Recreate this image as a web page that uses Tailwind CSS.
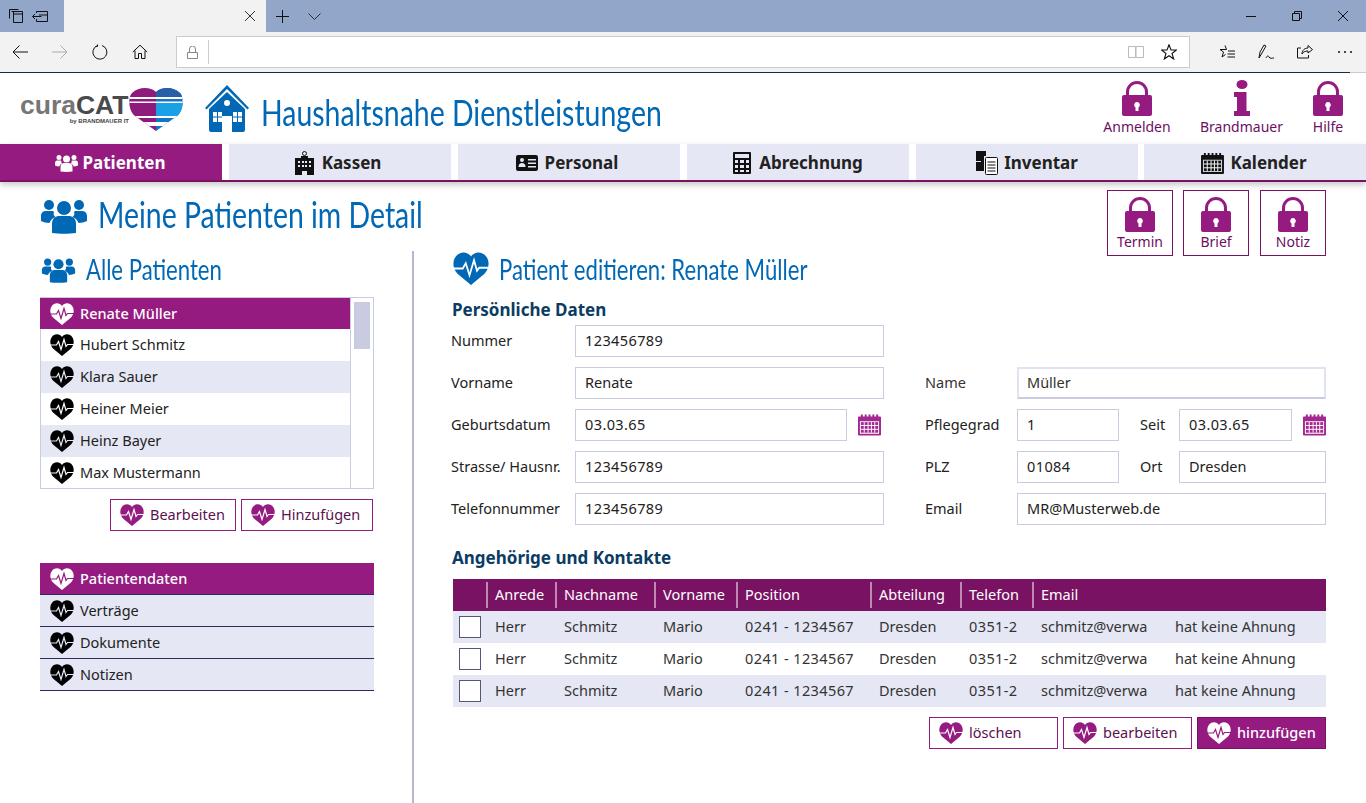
<!DOCTYPE html>
<html lang="de">
<head>
<meta charset="UTF-8">
<title>curaCAT - Haushaltsnahe Dienstleistungen</title>
<script src="https://cdn.jsdelivr.net/npm/@tailwindcss/browser@4"></script>
</head>
<body class="bg-white h-[803px] w-[1366px] overflow-hidden font-['Noto_Sans',sans-serif] text-[14.5px] text-[#222]">

<!-- shared icons -->
<svg class="absolute w-0 h-0" aria-hidden="true">
  <defs>
    <mask id="pulse" maskUnits="userSpaceOnUse" x="0" y="0" width="24" height="22">
      <rect width="24" height="22" fill="#fff"/>
      <polyline points="0,11 6.5,11 8.5,7.5 11,15.5 14,5.5 16,12.5 17.5,10.5 24,10.5" fill="none" stroke="#000" stroke-width="1.2"/>
    </mask>
    <symbol id="heart" viewBox="0 0 24 22"><path mask="url(#pulse)" fill="currentColor" d="M12 22 3 14.500C0 11.500-.5 6.500 1.500 3.500 4-.5 9.500-.8 12 3 14.500-.8 20-.5 22.500 3.500 24.500 6.500 24 11.500 21 14.500Z"/></symbol>
    <symbol id="lock" viewBox="0 0 30 36"><path d="M5.500 17V12a9.500 9.500 0 0 1 19 0v5" fill="none" stroke="currentColor" stroke-width="3"/><path fill="currentColor" fill-rule="evenodd" d="M2 15h26a2 2 0 0 1 2 2v17a2 2 0 0 1-2 2H2a2 2 0 0 1-2-2V17a2 2 0 0 1 2-2ZM15 22a3 3 0 0 0-1.500 5.500V31h3v-3.500A3 3 0 0 0 15 22Z"/></symbol>
    <symbol id="users" viewBox="0 0 46 36"><g fill="currentColor"><circle cx="23" cy="10" r="7"/><path d="M11 36V27c0-6 4-8 7-8h10c3 0 7 2 7 8v9c-7 1-17 1-24 0Z" transform="translate(0 -1)"/><circle cx="8" cy="7" r="5"/><circle cx="38" cy="7" r="5"/><path d="M0 23v-5c0-4 3-5 5-5h6c1 0 2 .5 2 1-1 2 0 4 1.500 5-3 1-5 3-6 6-3 0-6-1-8.500-2Z"/><path d="M46 23v-5c0-4-3-5-5-5h-6c-1 0-2 .5-2 1 1 2 0 4-1.500 5 3 1 5 3 6 6 3 0 6-1 8.500-2Z"/></g></symbol>
    <symbol id="calendar" viewBox="0 0 24 22"><path fill="currentColor" fill-rule="evenodd" d="M1 2h22a1 1 0 0 1 1 1v18a1 1 0 0 1-1 1H1a1 1 0 0 1-1-1V3a1 1 0 0 1 1-1ZM2 7v13h20V7Z"/><g fill="currentColor"><rect x="3" width="2" height="4"/><rect x="7" width="2" height="4"/><rect x="11" width="2" height="4"/><rect x="15" width="2" height="4"/><rect x="19" width="2" height="4"/><rect x="3" y="8" width="18" height="11"/></g><g stroke="#fff" stroke-width="1"><path d="M3 11.500h18M3 15.500h18M6.500 8v11M10.500 8v11M14 8v11M17.500 8v11"/></g></symbol>
  </defs>
</svg>

<!-- browser chrome: tab strip -->
<div class="h-8 bg-[#92a6c9] flex items-center">
  <div class="w-16 flex items-center h-8 pl-[9px] gap-[9px]">
    <svg class="w-[14px] h-[14px]" viewBox="0 0 14 14" fill="none" stroke="#111"><path d="M.5 9.500v-9h9M2.500 2.500h11v11h-9v-11M4.500 5h9"/></svg>
    <svg class="w-4 h-[11px]" viewBox="0 0 16 11" fill="none" stroke="#111"><path d="M4.500 2V.5h11v10h-11V8M.5 5.500h9M3 3 .5 5.500 3 8M7 4h8"/></svg>
  </div>
  <div class="w-[202px] h-8 bg-[#f2f2f2] flex items-center justify-end pr-[11px]">
    <svg class="w-[10px] h-[10px]" viewBox="0 0 10 10" stroke="#333" fill="none"><path d="M0 0 10 10M10 0 0 10"/></svg>
  </div>
  <svg class="w-[13px] h-[13px] ml-[10px]" viewBox="0 0 13 13" stroke="#111" fill="none"><path d="M6.500 0v13M0 6.500h13"/></svg>
  <svg class="w-[13px] h-[7px] ml-[19px]" viewBox="0 0 13 7" stroke="#333" fill="none"><path d="M.5.500l6 6 6-6"/></svg>
  <div class="ml-auto flex items-center gap-[36px] pr-[18px]">
    <div class="w-[10px] h-px bg-[#111]"></div>
    <svg class="w-[10px] h-[10px]" viewBox="0 0 10 10" fill="none" stroke="#111"><path d="M.5 2.500h7v7h-7zM2.500 2.500v-2h7v7h-2"/></svg>
    <svg class="w-[10px] h-[10px]" viewBox="0 0 10 10" stroke="#111" fill="none"><path d="M0 0 10 10M10 0 0 10"/></svg>
  </div>
</div>

<!-- browser chrome: toolbar -->
<div class="h-10 bg-[#f2f2f2] flex items-start">
  <div class="flex items-center h-10 w-[176px] pl-[12px] gap-[24px]">
    <svg class="w-4 h-4" viewBox="0 0 16 16" fill="none" stroke="#111"><path d="M16 8H1M7.500 1.500 1 8l6.500 6.500"/></svg>
    <svg class="w-4 h-4" viewBox="0 0 16 16" fill="none" stroke="#aaa"><path d="M0 8h15M8.500 1.500 15 8l-6.500 6.500"/></svg>
    <svg class="w-4 h-4" viewBox="0 0 16 16" fill="none" stroke="#111"><path d="M5 1.800A7 7 0 1 0 10 1.500M5.500 .500V2.500H3.500"/></svg>
    <svg class="w-4 h-4" viewBox="0 0 16 16" fill="none" stroke="#111"><path d="M.8 8 8 1.200 15.200 8M3 6.500V14.500h3.500v-5h3v5H13V6.500"/></svg>
  </div>
  <div class="w-[1014px] h-8 mt-1 bg-white border border-[#ccc] flex items-center">
    <svg class="w-[11px] h-[13px] ml-[10px]" viewBox="0 0 11 13" fill="none" stroke="#888"><path d="M.5 6.500h10v6H.500zM2.500 6.500V3a3 3 0 0 1 6 0v3.500"/></svg>
    <div class="w-px h-6 bg-[#ccc] ml-[10px]"></div>
    <svg class="w-4 h-[14px] ml-auto" viewBox="0 0 16 14" fill="none" stroke="#bbb"><path d="M.5 1.500h7v11h-7zM8 1.500h7.500v11H8z"/></svg>
    <svg class="w-4 h-4 ml-[17px] mr-[12px]" viewBox="0 0 16 16" fill="none" stroke="#111" stroke-width="1.100"><path d="M8 .8 10 6h5.500L11 9.500l1.700 5.500L8 11.700 3.300 15 5 9.500.5 6H6Z"/></svg>
  </div>
  <div class="flex items-center h-10 ml-[29px] gap-[23px]">
    <svg class="w-4 h-4" viewBox="0 0 16 16" fill="none" stroke="#111"><path d="M6 1.500 7.500 5.500H1L4.500 8 3 13 6.500 10.500M9 7h7M8.500 10h7.500M8.500 13h7.500"/></svg>
    <svg class="w-4 h-4" viewBox="0 0 16 16" fill="none" stroke="#111"><path d="M1 14 2 8 6 1l2 1-4 7-3 5M8 14c1-2 2-3 3-1s3 1 5 1"/></svg>
    <svg class="w-4 h-4" viewBox="0 0 16 16" fill="none" stroke="#111"><path d="M4 4H.5v10h11v-3M5 10c0-4 3-6 6-6V1.500L15.500 5.500 11 9V7C8 7 6 8 5 10Z"/></svg>
    <svg class="w-[14px] h-[2px] ml-[2px]" viewBox="0 0 14 2" fill="#111"><circle cx="1" cy="1" r="1"/><circle cx="7" cy="1" r="1"/><circle cx="13" cy="1" r="1"/></svg>
  </div>
</div>
<div class="h-px bg-[#ccc]"><div class="h-px w-[1350px] bg-[#1b2a4a]"></div></div>

<!-- app header -->
<header class="h-[71px] flex items-center">
  <div class="flex items-start ml-[20px] w-[163px] h-[43px] mt-[1px]">
    <div class="w-[109px] shrink-0 pt-[5px] font-['Liberation_Sans',sans-serif] font-bold">
      <div class="text-[26.500px] leading-[24px] text-[#767676] whitespace-nowrap">cura<span class="text-[#4a4a4a]">CAT</span></div>
      <div class="text-[6px] leading-[8px] text-right text-[#444] whitespace-nowrap">by BRANDMAUER IT</div>
    </div>
    <svg class="w-[54px] h-[43px] shrink-0" viewBox="0 0 54 43">
      <defs><clipPath id="logoheart"><path d="M27 43 6 28C-1 22-1 9 3 5 10-2 22-1 27 4 32-1 44-2 51 5 55 9 55 22 48 28Z"/></clipPath></defs>
      <g clip-path="url(#logoheart)">
        <rect width="27" height="43" fill="#8e1b7c"/><rect x="27" width="27" height="43" fill="#1473c4"/>
        <rect x="27" y="15" width="27" height="13" fill="#1aa0e6"/><rect x="27" width="27" height="9" fill="#2b5ea8"/>
        <rect y="9" width="54" height="2" fill="#fff"/><rect y="13.500" width="54" height="1.500" fill="#fff"/>
        <rect y="28" width="54" height="2" fill="#fff"/><rect y="34" width="54" height="4" fill="#fff"/>
      </g>
    </svg>
  </div>
  <svg class="w-[44px] h-[47px] ml-[22px] text-[#0068b4]" viewBox="0 0 44 47" fill="currentColor">
    <path fill-rule="evenodd" d="M22 0 44 23l-1.500 1.500L22 4 1.500 24.500 0 23ZM22 7 40 24V45a2 2 0 0 1-2 2H27V31H17V47H6a2 2 0 0 1-2-2V24ZM22 15a3 3 0 1 0 0 6 3 3 0 0 0 0-6ZM8 27v10h9V27ZM28 27v10h9V27Z"/>
    <path d="M12 27h1v10h-1zM8 31.500h9v1H8zM32 27h1v10h-1zM28 31.500h9v1h-9z"/>
  </svg>
  <h1 class="ml-3 mt-[6px] origin-left scale-x-[.79] font-['Lato',sans-serif] text-[36px] leading-none text-[#0068b4] whitespace-nowrap">Haushaltsnahe Dienstleistungen</h1>
  <div class="ml-auto flex items-start pr-[22px] h-[56px] -mt-[1px] text-[#6d0f5f] text-[14px]">
    <div class="flex flex-col items-center w-[70px]">
      <svg class="w-[30px] h-[36px] text-[#951b81]"><use href="#lock"/></svg>
      <span>Anmelden</span>
    </div>
    <div class="flex flex-col items-center w-[83px] ml-[28px]">
      <svg class="w-[16px] h-[36px] text-[#951b81]" viewBox="0 0 16 36" fill="currentColor"><ellipse cx="8" cy="4.500" rx="5.500" ry="4.500"/><path d="M0 12h12.500v19H16v5H0v-5h3V17H0Z"/></svg>
      <span>Brandmauer</span>
    </div>
    <div class="flex flex-col items-center w-[32px] ml-[29px]">
      <svg class="w-[30px] h-[36px] text-[#951b81]"><use href="#lock"/></svg>
      <span>Hilfe</span>
    </div>
  </div>
</header>

<!-- main navigation -->
<nav class="h-[38px] border-b-2 border-[#7a1263] shadow-[0_3px_6px_rgba(0,0,0,0.22)] flex gap-[7px] text-[17px] font-bold relative">
  <a class="w-[222px] pt-[2px] pr-[2px] bg-[#951b81] text-white flex items-center justify-center gap-[5px]">
    <svg class="w-[23px] h-[18px]"><use href="#users"/></svg>Patienten
  </a>
  <a class="w-[222px] pt-[2px] pr-[4px] bg-[#e5e7f4] flex items-center justify-center gap-[8px]">
    <svg class="w-[19px] h-[24px]" viewBox="0 0 19 24"><path fill="#111" fill-rule="evenodd" d="M6 5h7v2h6v17h-7v-4H7v4H0V7h6ZM3 10v2h2v-2ZM7 10v2h2v-2ZM10 10v2h2v-2ZM14 10v2h2v-2ZM3 14v2h2v-2ZM7 14v2h2v-2ZM10 14v2h2v-2ZM14 14v2h2v-2Z"/><circle cx="9.500" cy="2.500" r="2" fill="none" stroke="#111"/></svg>Kassen
  </a>
  <a class="w-[222px] pt-[2px] pr-[4px] bg-[#e5e7f4] flex items-center justify-center gap-[7px]">
    <svg class="w-[22px] h-[16px]" viewBox="0 0 22 16"><path fill="#111" fill-rule="evenodd" d="M2 0h18a2 2 0 0 1 2 2v12a2 2 0 0 1-2 2H2a2 2 0 0 1-2-2V2a2 2 0 0 1 2-2ZM6 3a2 2 0 1 0 0 4 2 2 0 0 0 0-4ZM2.500 12h7c0-3-1.500-4-3.500-4S2.500 9 2.500 12ZM12 4v1.500h8V4ZM12 7.500V9h8V7.500ZM12 11v1.500h8V11Z"/></svg>Personal
  </a>
  <a class="w-[222px] pt-[2px] bg-[#e5e7f4] flex items-center justify-center gap-[8px]">
    <svg class="w-[18px] h-[22px]" viewBox="0 0 18 22"><path fill="#111" fill-rule="evenodd" d="M1 0h16a1 1 0 0 1 1 1v20a1 1 0 0 1-1 1H1a1 1 0 0 1-1-1V1a1 1 0 0 1 1-1ZM2 2v4h14V2ZM2 8v3h3V8ZM7 8v3h4V8ZM13 8v3h3V8ZM2 13v3h3v-3ZM7 13v3h4v-3ZM13 13v3h3v-3ZM2 18v2h3v-2ZM7 18v2h4v-2ZM13 18v2h3v-2Z"/></svg>Abrechnung
  </a>
  <a class="w-[222px] pt-[2px] bg-[#e5e7f4] flex items-center justify-center gap-[6px]">
    <svg class="w-[22px] h-[24px]" viewBox="0 0 22 24"><path fill="#111" d="M0 0h10v5H8v15H0v-9h5v-1H0Z"/><rect x="9.500" y="6.500" width="12" height="17" rx="1" fill="#fff" stroke="#111"/><path d="M11.500 11h8M11.500 14h8M11.500 17h8M11.500 20h8" stroke="#111"/></svg>Inventar
  </a>
  <a class="flex-1 pt-[2px] pr-[2px] -ml-px bg-[#e5e7f4] flex items-center justify-center gap-[6px]">
    <svg class="w-[23px] h-[21px] text-[#111]"><use href="#calendar"/></svg>Kalender
  </a>
</nav>

<main class="flex h-[621px]">
  <!-- left column -->
  <aside class="w-[373px] shrink-0 pl-[40px] pt-[16px] flex flex-col">
    <div class="flex items-center h-[35px] text-[#0068b4]">
      <svg class="w-[46px] h-[36px] ml-[1px] shrink-0"><use href="#users"/></svg>
      <h2 class="ml-[11px] -mt-[4px] origin-left scale-x-[.79] font-['Lato',sans-serif] text-[36px] leading-none whitespace-nowrap">Meine Patienten im Detail</h2>
    </div>
    <div class="flex items-center h-[30px] mt-[22px] text-[#0068b4]">
      <svg class="w-[35px] h-[26px] ml-[1px] shrink-0"><use href="#users"/></svg>
      <h3 class="ml-[10px] -mt-[2px] origin-left scale-x-[.79] font-['Lato',sans-serif] text-[28px] leading-none whitespace-nowrap">Alle Patienten</h3>
    </div>
    <div class="mt-[12px] w-[334px] h-[192px] border border-[#c9cbe0] flex">
      <ul class="w-[310px] border-r border-[#c9cbe0]">
        <li class="h-[31px] -ml-px pl-[10px] bg-[#951b81] text-white font-medium flex items-center gap-[6px]"><svg class="w-6 h-[22px]"><use href="#heart"/></svg>Renate Müller</li>
        <li class="h-[32px] pl-[9px] flex items-center gap-[6px]"><svg class="w-6 h-[22px] text-black"><use href="#heart"/></svg>Hubert Schmitz</li>
        <li class="h-[32px] pl-[9px] bg-[#e5e7f4] flex items-center gap-[6px]"><svg class="w-6 h-[22px] text-black"><use href="#heart"/></svg>Klara Sauer</li>
        <li class="h-[32px] pl-[9px] flex items-center gap-[6px]"><svg class="w-6 h-[22px] text-black"><use href="#heart"/></svg>Heiner Meier</li>
        <li class="h-[32px] pl-[9px] bg-[#e5e7f4] flex items-center gap-[6px]"><svg class="w-6 h-[22px] text-black"><use href="#heart"/></svg>Heinz Bayer</li>
        <li class="h-[31px] pl-[9px] flex items-center gap-[6px]"><svg class="w-6 h-[22px] text-black"><use href="#heart"/></svg>Max Mustermann</li>
      </ul>
      <div class="flex-1 pt-[4px] px-[3px]"><div class="h-[47px] bg-[#c9cbe0]"></div></div>
    </div>
    <div class="mt-[10px] w-[333px] flex justify-end gap-[5px] text-[#5c1150]">
      <button class="w-[126px] h-[32px] border border-[#951b81] flex items-center pl-[9px] gap-[6px]"><svg class="w-6 h-[22px] text-[#951b81]"><use href="#heart"/></svg>Bearbeiten</button>
      <button class="w-[132px] h-[32px] border border-[#951b81] flex items-center pl-[9px] gap-[6px]"><svg class="w-6 h-[22px] text-[#951b81]"><use href="#heart"/></svg>Hinzufügen</button>
    </div>
    <ul class="mt-[32px] w-[334px]">
      <li class="h-[32px] pl-[10px] bg-[#951b81] text-white font-medium flex items-center gap-[6px] border-b border-[#2e2a5c]"><svg class="w-6 h-[22px]"><use href="#heart"/></svg>Patientendaten</li>
      <li class="h-[32px] pl-[10px] bg-[#e5e7f4] flex items-center gap-[6px] border-b border-[#2e2a5c]"><svg class="w-6 h-[22px] text-black"><use href="#heart"/></svg>Verträge</li>
      <li class="h-[32px] pl-[10px] bg-[#e5e7f4] flex items-center gap-[6px] border-b border-[#2e2a5c]"><svg class="w-6 h-[22px] text-black"><use href="#heart"/></svg>Dokumente</li>
      <li class="h-[32px] pl-[10px] bg-[#e5e7f4] flex items-center gap-[6px] border-b border-[#2e2a5c]"><svg class="w-6 h-[22px] text-black"><use href="#heart"/></svg>Notizen</li>
    </ul>
  </aside>

  <!-- right column -->
  <section class="flex-1 relative">
    <div class="absolute left-0 top-[69px] bottom-0 ml-[39px] w-[2px] bg-[#b5b7d0]"></div>
    <div class="pl-[79px] pr-[40px]">
      <div class="flex justify-end gap-[10px] pt-[8px] h-[69px] text-[#6d0f5f] text-[14px]">
        <div class="w-[66px] h-[66px] border border-[#7a1263] flex flex-col items-center pt-[5px]"><svg class="w-[30px] h-[36px] text-[#951b81]"><use href="#lock"/></svg><span class="-mt-[1px]">Termin</span></div>
        <div class="w-[66px] h-[66px] border border-[#7a1263] flex flex-col items-center pt-[5px]"><svg class="w-[30px] h-[36px] text-[#951b81]"><use href="#lock"/></svg><span class="-mt-[1px]">Brief</span></div>
        <div class="w-[66px] h-[66px] border border-[#7a1263] flex flex-col items-center pt-[5px] ml-[1px]"><svg class="w-[30px] h-[36px] text-[#951b81]"><use href="#lock"/></svg><span class="-mt-[1px]">Notiz</span></div>
      </div>
      <div class="flex items-center h-[34px] text-[#0068b4]">
        <svg class="w-9 h-[33px] ml-[1px] shrink-0"><use href="#heart"/></svg>
        <h2 class="ml-[10px] mt-[1px] origin-left scale-x-[.79] font-['Lato',sans-serif] text-[28px] leading-none whitespace-nowrap">Patient editieren: Renate Müller</h2>
      </div>
      <h3 class="mt-[12px] text-[17px] leading-[26px] font-bold text-[#0b3c63]">Persönliche Daten</h3>

      <form class="mt-[2px] -ml-px grid grid-cols-[124px_309px_41px_92px_309px] gap-y-[10px] items-center">
        <label>Nummer</label>
        <div class="h-[32px] border border-[#c9cbe0] flex items-center px-[9px] tracking-[.4px]">123456789</div>
        <div></div><div></div><div></div>

        <label>Vorname</label>
        <div class="h-[32px] border border-[#c9cbe0] flex items-center px-[9px]">Renate</div>
        <div></div>
        <label class="text-[#333]">Name</label>
        <div class="h-[32px] border-2 border-[#e0e3f1] border-b-[#c9cbe0] flex items-center px-[8px] text-[#333]">Müller</div>

        <label>Geburtsdatum</label>
        <div class="flex items-center">
          <div class="w-[272px] h-[32px] border border-[#c9cbe0] flex items-center px-[9px] tracking-[.4px]">03.03.65</div>
          <svg class="w-[23px] h-[22px] ml-[11px] text-[#a3288f]"><use href="#calendar"/></svg>
        </div>
        <div></div>
        <label>Pflegegrad</label>
        <div class="flex items-center">
          <div class="w-[102px] h-[32px] border border-[#c9cbe0] flex items-center px-[9px]">1</div>
          <label class="ml-[21px] w-[39px]">Seit</label>
          <div class="w-[113px] h-[32px] border border-[#c9cbe0] flex items-center px-[9px] tracking-[.4px]">03.03.65</div>
          <svg class="w-[23px] h-[22px] ml-[11px] text-[#a3288f]"><use href="#calendar"/></svg>
        </div>

        <label>Strasse/ Hausnr.</label>
        <div class="h-[32px] border border-[#c9cbe0] flex items-center px-[9px] tracking-[.4px]">123456789</div>
        <div></div>
        <label>PLZ</label>
        <div class="flex items-center">
          <div class="w-[102px] h-[32px] border border-[#c9cbe0] flex items-center px-[9px] tracking-[.4px]">01084</div>
          <label class="ml-[21px] w-[39px]">Ort</label>
          <div class="flex-1 h-[32px] border border-[#c9cbe0] flex items-center px-[9px]">Dresden</div>
        </div>

        <label>Telefonnummer</label>
        <div class="h-[32px] border border-[#c9cbe0] flex items-center px-[9px] tracking-[.4px]">123456789</div>
        <div></div>
        <label>Email</label>
        <div class="h-[32px] border border-[#c9cbe0] flex items-center px-[9px]">MR@Musterweb.de</div>
      </form>

      <h3 class="mt-[20px] text-[17px] leading-[26px] font-bold text-[#0b3c63]">Angehörige und Kontakte</h3>

      <table class="mt-[8px] ml-px w-[873px] table-fixed border-collapse text-left text-[#333]">
        <colgroup><col class="w-[33px]"><col class="w-[69px]"><col class="w-[99px]"><col class="w-[82px]"><col class="w-[134px]"><col class="w-[90px]"><col class="w-[72px]"><col class="w-[143px]"><col></colgroup>
        <thead class="bg-[#7a1263] text-white">
          <tr class="h-[32px]">
            <th class="font-normal p-0"></th>
            <th class="font-normal p-0"><div class="border-l-2 border-white/50 h-[26px] leading-[24px] pl-[7px]">Anrede</div></th>
            <th class="font-normal p-0"><div class="border-l-2 border-white/50 h-[26px] leading-[24px] pl-[7px]">Nachname</div></th>
            <th class="font-normal p-0"><div class="border-l-2 border-white/50 h-[26px] leading-[24px] pl-[7px]">Vorname</div></th>
            <th class="font-normal p-0"><div class="border-l-2 border-white/50 h-[26px] leading-[24px] pl-[7px]">Position</div></th>
            <th class="font-normal p-0"><div class="border-l-2 border-white/50 h-[26px] leading-[24px] pl-[7px]">Abteilung</div></th>
            <th class="font-normal p-0"><div class="border-l-2 border-white/50 h-[26px] leading-[24px] pl-[7px]">Telefon</div></th>
            <th class="font-normal p-0"><div class="border-l-2 border-white/50 h-[26px] leading-[24px] pl-[7px]">Email</div></th>
            <th class="p-0"></th>
          </tr>
        </thead>
        <tbody>
          <tr class="h-[32px] bg-[#e5e7f4]">
            <td class="p-0 pl-[6px]"><div class="w-[22px] h-[22px] bg-white border border-[#55557a]"></div></td>
            <td class="p-0 pl-[9px]">Herr</td><td class="p-0 pl-[9px]">Schmitz</td><td class="p-0 pl-[9px]">Mario</td><td class="p-0 pl-[9px] tracking-[.4px]">0241 - 1234567</td><td class="p-0 pl-[9px]">Dresden</td><td class="p-0 pl-[9px] tracking-[.4px]">0351-2</td><td class="p-0 pl-[9px] whitespace-nowrap">schmitz@verwa</td><td class="p-0">hat keine Ahnung</td>
          </tr>
          <tr class="h-[32px]">
            <td class="p-0 pl-[6px]"><div class="w-[22px] h-[22px] bg-white border border-[#55557a]"></div></td>
            <td class="p-0 pl-[9px]">Herr</td><td class="p-0 pl-[9px]">Schmitz</td><td class="p-0 pl-[9px]">Mario</td><td class="p-0 pl-[9px] tracking-[.4px]">0241 - 1234567</td><td class="p-0 pl-[9px]">Dresden</td><td class="p-0 pl-[9px] tracking-[.4px]">0351-2</td><td class="p-0 pl-[9px] whitespace-nowrap">schmitz@verwa</td><td class="p-0">hat keine Ahnung</td>
          </tr>
          <tr class="h-[32px] bg-[#e5e7f4]">
            <td class="p-0 pl-[6px]"><div class="w-[22px] h-[22px] bg-white border border-[#55557a]"></div></td>
            <td class="p-0 pl-[9px]">Herr</td><td class="p-0 pl-[9px]">Schmitz</td><td class="p-0 pl-[9px]">Mario</td><td class="p-0 pl-[9px] tracking-[.4px]">0241 - 1234567</td><td class="p-0 pl-[9px]">Dresden</td><td class="p-0 pl-[9px] tracking-[.4px]">0351-2</td><td class="p-0 pl-[9px] whitespace-nowrap">schmitz@verwa</td><td class="p-0">hat keine Ahnung</td>
          </tr>
        </tbody>
      </table>

      <div class="mt-[10px] flex justify-end gap-[5px] text-[#5c1150]">
        <button class="w-[129px] h-[32px] border border-[#951b81] flex items-center pl-[9px] gap-[6px]"><svg class="w-6 h-[22px] text-[#951b81]"><use href="#heart"/></svg>löschen</button>
        <button class="w-[129px] h-[32px] border border-[#951b81] flex items-center pl-[9px] gap-[6px]"><svg class="w-6 h-[22px] text-[#951b81]"><use href="#heart"/></svg>bearbeiten</button>
        <button class="w-[129px] h-[32px] bg-[#951b81] border border-[#7a1263] text-white font-medium flex items-center pl-[9px] gap-[6px]"><svg class="w-6 h-[22px]"><use href="#heart"/></svg>hinzufügen</button>
      </div>
    </div>
  </section>
</main>
</body>
</html>
